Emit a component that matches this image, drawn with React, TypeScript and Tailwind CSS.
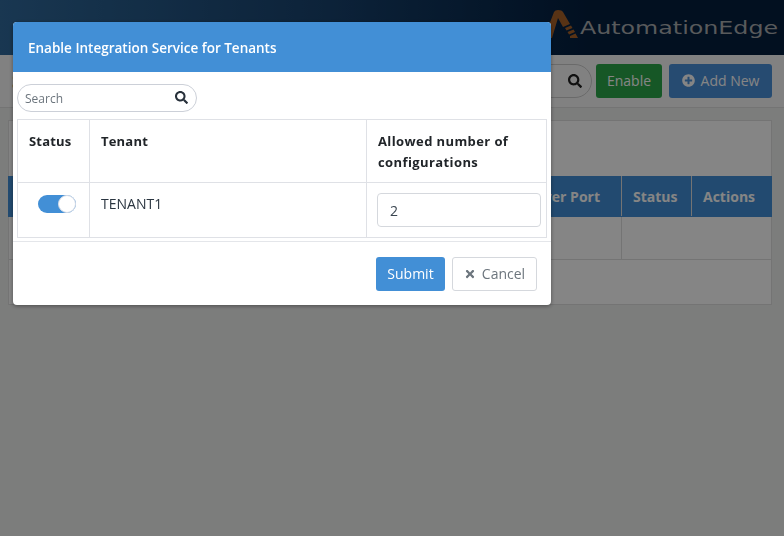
import { FaSearch, FaPlusCircle, FaTimes } from 'react-icons/fa';

const font = { fontFamily: '"Open Sans", "Noto Sans", sans-serif' };

const Logo = () => (
    <div className="flex items-end pr-[6px] pb-[17px]">
        <svg width="34" height="29" viewBox="0 0 34 29" className="mb-[-1px]">
            <path d="M0 28 L10 2 Q11 0 14 0 Q18 0 19 2 L26 14 L19 17 L14 8 L8 28 Z" fill="#a9622a" />
            <path d="M21 18 L27 15.5 L28.5 18 L22.5 20.5 Z M23.5 22 L29.5 19.5 L31 22 L25 24.5 Z M26 26 L31.5 23.5 L34 28 L26 28 Z" fill="#a9622a" />
        </svg>
        <span className="ml-[50px] inline-block origin-right scale-x-[1.32] font-['DejaVu_Sans'] text-[18px] leading-[20px] text-[#a9acaf]">AutomationEdge</span>
    </div>
);

const Background = () => (
    <div className="min-h-[536px] bg-[#eeefee]">
        <header className="h-[55px] flex justify-end bg-gradient-to-r from-[#306a9c] from-0% via-[#163f6a] via-45% to-[#041f3f] to-75% shadow-[0_1px_3px_rgba(0,0,0,0.5)]">
            <Logo />
        </header>
        <div className="h-[53px] bg-[#f8f8f8] border-b border-[#dedede] flex items-center justify-between pl-3 pr-3">
            <h1 className="text-[20px] font-bold text-[#222]">Services</h1>
            <div className="flex items-center gap-[5px] pb-[1px]">
                <div className="w-[230px] h-[34px] rounded-full border border-[#ccc] flex items-center justify-end pr-[9px] mr-[-1px]">
                    <FaSearch size={14} className="text-[#222]" />
                </div>
                <button className="w-[66px] h-[34px] rounded-[3px] bg-[#2ba84a] text-white text-[14px]">Enable</button>
                <button className="ml-[2px] w-[103px] h-[34px] rounded-[3px] bg-[#4a90d9] text-white text-[14px] flex items-center justify-center gap-[6px]">
                    <FaPlusCircle size={13} />
                    Add New
                </button>
            </div>
        </div>
        <div className="ml-2 mr-3 mt-3 h-[185px] border border-[#dedede] bg-white">
            <div className="-mx-px mt-[55px] h-[41px] bg-[#428fd6] flex justify-end text-[14px] leading-[19px] font-bold text-white pb-[1px]">
                <div className="pr-[21px] flex items-center">Server Port</div>
                <div className="w-[70px] border-l border-[#dedede] flex items-center pl-[11px]">Status</div>
                <div className="w-[81px] border-l border-[#dedede] flex items-center pl-[11px]">Actions</div>
            </div>
            <div className="h-[43px] flex justify-end border-b border-[#dedede]">
                <div className="w-[150px] border-l border-[#dedede]" />
            </div>
        </div>
    </div>
);

const Modal = () => (
    <div className="fixed left-[13px] top-[22px] w-[538px] h-[283px] bg-white rounded-[4px] shadow-[0_1px_4px_rgba(0,0,0,0.4)] overflow-hidden flex flex-col">
        <div className="h-[50px] shrink-0 bg-[#428fd6] flex items-center pl-[15px] pt-[2px] text-[13.5px] font-semibold text-white">
            Enable Integration Service for Tenants
        </div>
        <div className="h-[170px] shrink-0 border-b border-[#e4e6ea] px-1 pt-[12px]">
            <div className="w-[180px] h-[28px] rounded-full border border-[#ccd0d8] flex items-center justify-between pl-[7px] pr-[8px]">
                <span className="text-[12px] leading-[16px] pt-[1px] text-[#6c757d]">Search</span>
                <FaSearch size={13} className="text-[#27303a] mb-[2px]" />
            </div>
            <table className="mt-[7px] w-[530px] h-[119px] table-fixed border-collapse text-[13px] text-[#212529]">
                <colgroup>
                    <col className="w-[72px]" />
                    <col className="w-[277px]" />
                    <col />
                </colgroup>
                <thead>
                    <tr className="h-[63px]">
                        <th className="border border-[#dfe1e6] px-[11px] pt-[12px] align-top text-left font-bold tracking-[0.2px]">Status</th>
                        <th className="border border-[#dfe1e6] px-[11px] pt-[12px] align-top text-left font-bold tracking-[0.2px]">Tenant</th>
                        <th className="border border-[#dfe1e6] px-[11px] pt-[11px] align-top text-left font-bold leading-[21px] tracking-[0.4px]">Allowed number of configurations</th>
                    </tr>
                </thead>
                <tbody>
                    <tr>
                        <td className="border border-[#dfe1e6] pt-[12px] align-top pl-[20px]">
                            <div className="w-[38px] h-[18px] rounded-full bg-[#428fd6] flex justify-end">
                                <div className="w-[18px] h-[18px] rounded-full bg-white border border-[#d5dbe6]" />
                            </div>
                        </td>
                        <td className="border border-[#dfe1e6] px-[11px] pt-[11px] align-top text-[14px] leading-[19px] text-[#2a3540]">TENANT1</td>
                        <td className="border border-[#dfe1e6] pl-[10px] pr-[5px] pt-[10px] align-top">
                            <div className="h-[34px] rounded-[4px] border border-[#d5d8dd] flex items-center pl-[12px] text-[14px] text-[#3a4550]">2</div>
                        </td>
                    </tr>
                </tbody>
            </table>
        </div>
        <div className="flex-1 flex justify-end items-start gap-[7px] pt-[15px] pr-[14px] text-[14px] leading-[18px]">
            <button className="w-[69px] h-[34px] rounded-[3px] bg-[#428fd6] text-white pb-[1px]">Submit</button>
            <button className="w-[85px] h-[34px] rounded-[3px] border border-[#d5d8dd] bg-white text-[#6c757d] flex items-center justify-center gap-[6px] pb-[1px]">
                <FaTimes size={12} />
                Cancel
            </button>
        </div>
    </div>
);

const App = () => (
    <div className="relative h-[536px] overflow-hidden" style={font}>
        <Background />
        <div className="fixed inset-0 bg-black/48" />
        <Modal />
    </div>
);

export default App;
